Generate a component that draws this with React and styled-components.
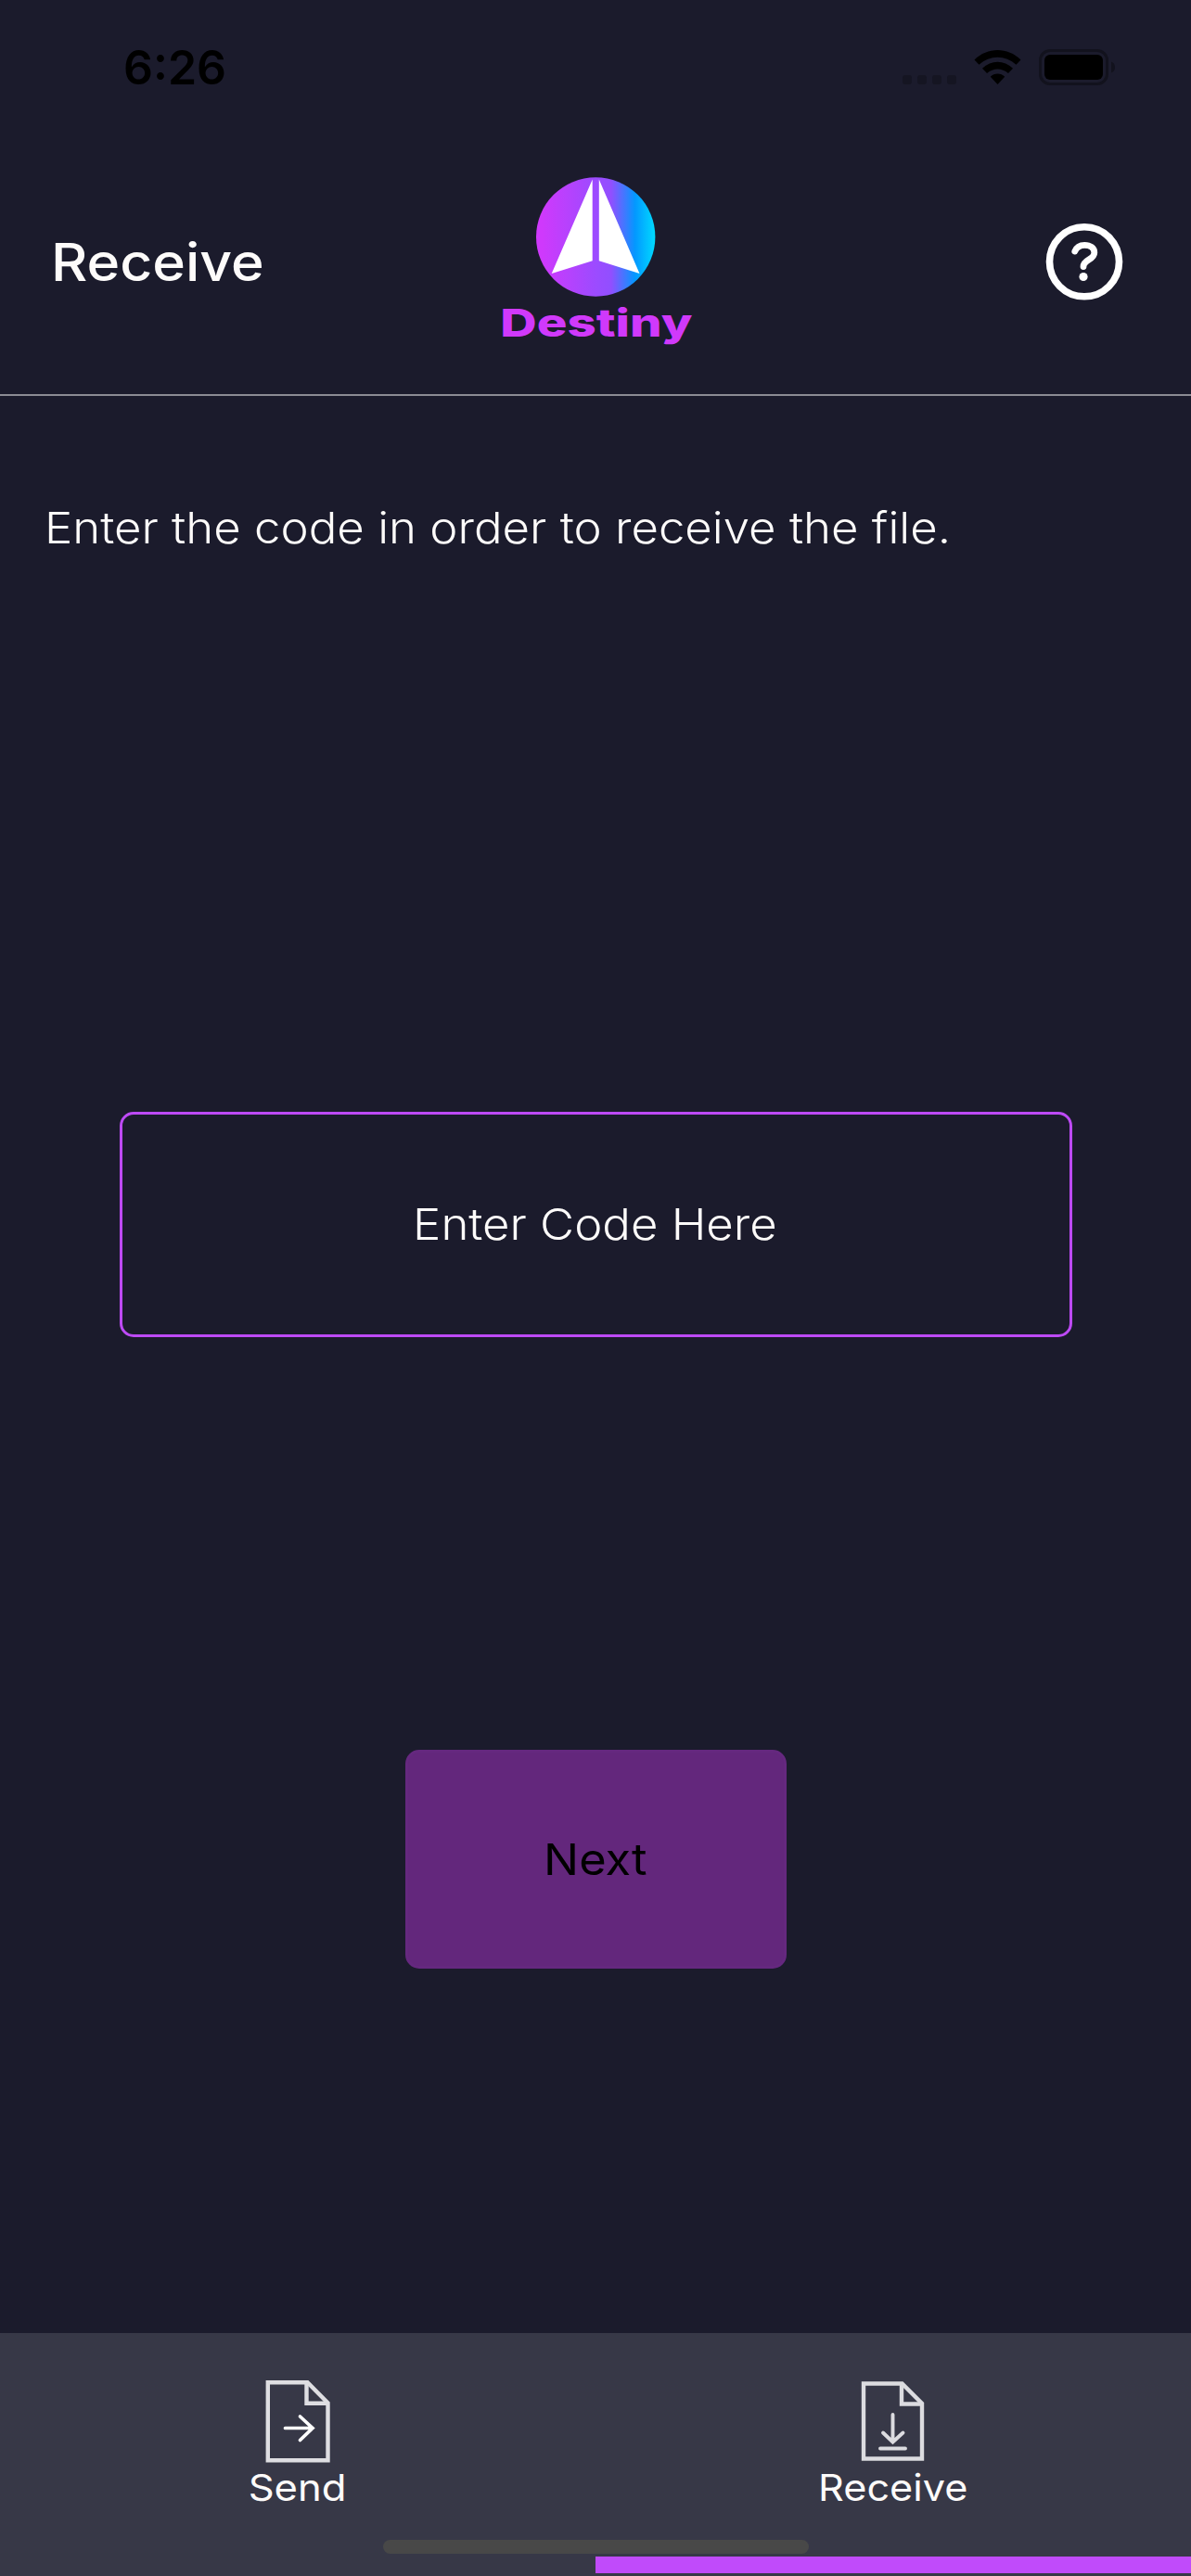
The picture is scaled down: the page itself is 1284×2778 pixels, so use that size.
import React from "react";
import styled, { createGlobalStyle } from "styled-components";

const GlobalStyle = createGlobalStyle`
  *, *::before, *::after { box-sizing: border-box; }
  body {
    margin: 0;
    background: #1b1b2c;
    font-family: Inter, "Liberation Sans", sans-serif;
  }
`;

const Screen = styled.div`
  position: relative;
  display: flex;
  flex-direction: column;
  width: 1284px;
  height: 2778px;
  overflow: hidden;
  background: #1b1b2c;
  color: #fdfbfa;
`;

const StatusBar = styled.div`
  display: flex;
  align-items: center;
  height: 146px;
  padding: 0 82px 0 133px;
  color: #000;
`;

const Clock = styled.time`
  margin-right: auto;
  font-size: 51px;
  font-weight: 600;
  line-height: 60px;
`;

const StatusIcons = styled.div`
  display: flex;
  gap: 19px;
  svg { display: block; }
`;

const Header = styled.header`
  display: grid;
  grid-template-columns: 1fr auto 1fr;
  align-items: center;
  height: 281px;
  padding: 0 55px 6px;
  border-bottom: 2px solid #8b8b94;
`;

const Stretch = styled.span`
  display: inline-block;
  white-space: nowrap;
  transform: scaleX(${(p) => p.$x || 1});
  transform-origin: ${(p) => p.$origin || "center"};
`;

const Title = styled.h1`
  margin: 0;
  font-size: 56px;
  font-weight: 480;
  line-height: 70px;
`;

const Brand = styled.div`
  display: flex;
  flex-direction: column;
  align-items: center;
  width: 204px;
  height: 183px;
  svg { display: block; flex: none; }
`;

const BrandName = styled.div`
  padding-left: 2px;
  font-size: 41px;
  font-weight: 800;
  line-height: 56px;
  color: #d039fb;
`;

const HelpButton = styled.button`
  justify-self: end;
  margin-right: 18px;
  padding: 0;
  border: 0;
  background: none;
  line-height: 0;
`;

const Main = styled.main`
  display: flex;
  flex: 1;
  flex-direction: column;
  align-items: center;
  padding-top: 112px;
`;

const Instruction = styled.p`
  align-self: flex-start;
  margin: 0 0 0 48px;
  font-size: 47px;
  font-weight: 300;
  line-height: 60px;
`;

const CodeField = styled.div`
  display: flex;
  align-items: center;
  justify-content: center;
  width: 1027px;
  height: 243px;
  margin-top: 600px;
  padding: 0 1px 3px 0;
  border: 3px solid #bd4af5;
  border-radius: 15px;
  font-size: 47px;
  font-weight: 300;
`;

const NextButton = styled.button`
  width: 411px;
  height: 236px;
  margin-top: 445px;
  padding: 0 0 2px;
  border: 3px solid #65287f;
  border-radius: 15px;
  background: #63277c;
  color: #000;
  font-family: inherit;
  font-size: 47px;
  font-weight: 430;
`;

const TabBar = styled.nav`
  display: grid;
  grid-template-columns: 1fr 1fr;
  height: 262px;
  background: #373847;
`;

const Tab = styled.a`
  display: flex;
  flex-direction: column;
  align-items: center;
  padding-top: 51px;
  border-bottom: 3px solid #373847;
  box-shadow: ${(p) => (p.$active ? "inset 0 -18px #c04bfa" : "none")};
  svg { display: block; }
`;

const TabLabel = styled.span`
  font-size: 40px;
  font-weight: 380;
  line-height: 54px;
`;

const HomeIndicator = styled.div`
  position: absolute;
  left: 413px;
  bottom: 24px;
  width: 459px;
  height: 15px;
  border-radius: 8px;
  background: #484848;
`;

const SignalDots = () => (
  <svg width="58" height="40" viewBox="973 53 58 40" fill="#151522">
    {[973, 989, 1005, 1021].map((x) => (
      <rect key={x} x={x} y="81" width="10" height="10" rx="3" />
    ))}
  </svg>
);

const Wifi = () => (
  <svg width="51" height="40" viewBox="1050 53 51 40" fill="#000">
    <path d="M1050.500 64.500C1064.500 50.500 1086.500 50.500 1100.500 64.500L1095.500 69.700C1084 59 1067 59 1055.500 69.700Z" />
    <path d="M1059 73.700C1068.500 64.500 1082.500 64.500 1092 73.700L1087 79C1080 73 1071 73 1064 79Z" />
    <path d="M1067.800 82.700C1072 78.500 1079 78.500 1083.200 82.700L1075.500 91Z" />
  </svg>
);

const Battery = () => (
  <svg width="82" height="40" viewBox="1120 53 82 40">
    <rect x="1121.500" y="54.500" width="72" height="36" rx="10.500" fill="none" stroke="#12121d" strokeWidth="3" />
    <rect x="1126" y="59" width="63" height="27" rx="6" fill="#000" />
    <path d="M1198 66.500 Q1202 68 1202 72.500 T1198 78.500Z" fill="#12121d" />
  </svg>
);

const Logo = () => (
  <svg width="129" height="129" viewBox="578 191 129 129">
    <defs>
      <linearGradient id="destiny" x1="0" x2="1" y1="0" y2="0">
        <stop offset="0.05" stopColor="#cf39fc" />
        <stop offset="0.5" stopColor="#9c4bff" />
        <stop offset="0.63" stopColor="#914fff" />
        <stop offset="0.83" stopColor="#0398ff" />
        <stop offset="1" stopColor="#00dbff" />
      </linearGradient>
    </defs>
    <circle cx="642.200" cy="255.500" r="64.200" fill="url(#destiny)" />
    <path d="M638.700 193.500V281.300L594.700 295Z M645.800 193.500V281.300L689.500 295Z" fill="#fff" />
  </svg>
);

const HelpIcon = () => (
  <svg width="84" height="84" viewBox="1127.500 241 84 84" fill="none" stroke="#fff" strokeLinecap="round">
    <circle cx="1169.500" cy="282.300" r="37.500" strokeWidth="7.600" />
    <path d="M1159.300 271C1161 266.800 1165 264.300 1169.800 264.300C1176 264.300 1180.300 267.500 1180.300 272.500C1180.300 280.500 1168.500 279.500 1168.500 287.500" strokeWidth="6.800" />
    <circle cx="1168.500" cy="298.500" r="4.600" fill="#fff" stroke="none" />
  </svg>
);

const SendIcon = () => (
  <svg width="70" height="89" viewBox="286 2567 70 89" fill="none" stroke="#dedee2" strokeWidth="4.400">
    <path d="M288.800 2569.300H331.500L353.500 2591.500V2653.300H288.800Z" />
    <path d="M330.500 2570V2591.800H353" />
    <path d="M307.500 2618.500H337M323.500 2606L337 2618.500L323.500 2631.500" strokeLinecap="round" stroke="#fff" strokeWidth="3.700" />
  </svg>
);

const ReceiveIcon = () => (
  <svg width="70" height="89" viewBox="928.500 2567 70 89" fill="none" stroke="#dcdce0" strokeWidth="4.400">
    <path d="M931.500 2570.500H973L994.500 2592V2651.500H931.500Z" />
    <path d="M972.500 2571V2592.500H994" />
    <path d="M963 2604V2633M952.500 2623.500L963 2633.500L974 2623.500M949.500 2640.500H976.500" strokeLinecap="round" strokeWidth="3.900" />
  </svg>
);

export default function App() {
  return (
    <Screen>
      <GlobalStyle />
      <StatusBar>
        <Clock>
          <Stretch $x={0.98} $origin="left">6:26</Stretch>
        </Clock>
        <StatusIcons>
          <SignalDots />
          <Wifi />
          <Battery />
        </StatusIcons>
      </StatusBar>
      <Header>
        <Title>
          <Stretch $x={1.085} $origin="left">Receive</Stretch>
        </Title>
        <Brand>
          <Logo />
          <BrandName>
            <Stretch $x={1.33}>Destiny</Stretch>
          </BrandName>
        </Brand>
        <HelpButton aria-label="Help">
          <HelpIcon />
        </HelpButton>
      </Header>
      <Main>
        <Instruction>
          <Stretch $x={1.083} $origin="left">Enter the code in order to receive the file.</Stretch>
        </Instruction>
        <CodeField>
          <Stretch $x={1.082}>Enter Code Here</Stretch>
        </CodeField>
        <NextButton>
          <Stretch $x={1.075}>Next</Stretch>
        </NextButton>
      </Main>
      <TabBar>
        <Tab>
          <SendIcon />
          <TabLabel>
            <Stretch $x={1.09}>Send</Stretch>
          </TabLabel>
        </Tab>
        <Tab $active>
          <ReceiveIcon />
          <TabLabel>
            <Stretch $x={1.08}>Receive</Stretch>
          </TabLabel>
        </Tab>
      </TabBar>
      <HomeIndicator />
    </Screen>
  );
}
